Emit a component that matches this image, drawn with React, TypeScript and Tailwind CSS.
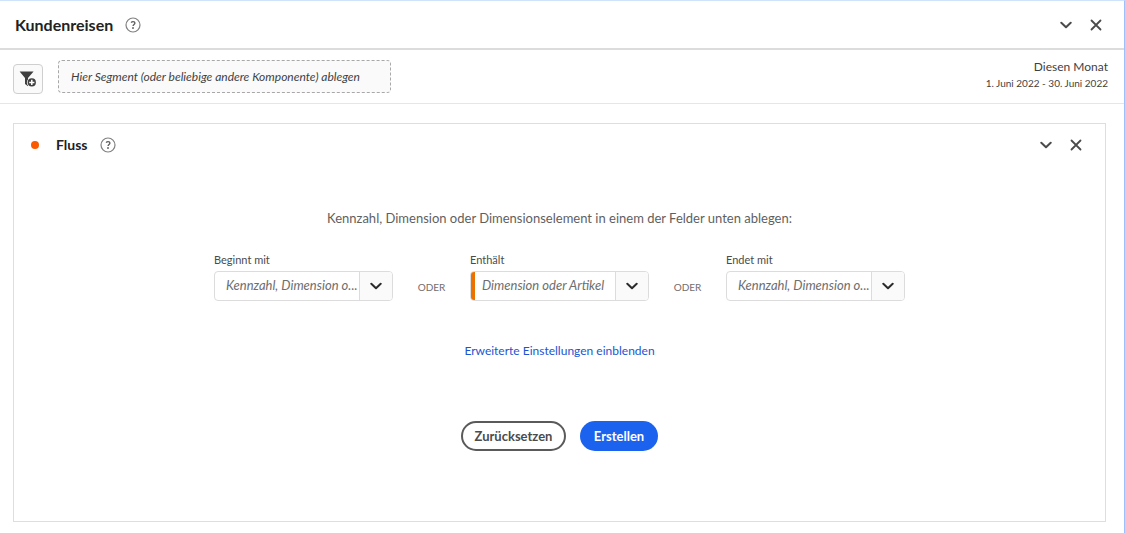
import { useId } from "react";
import type { ReactNode } from "react";

function HelpIcon() {
  return (
    <svg className="size-4" viewBox="0 0 16 16" fill="none" aria-hidden="true">
      <circle cx="8" cy="8" r="7" stroke="#808080" strokeWidth="1.2" />
      <path d="M6.2 5.6C6.6 4.9 7.3 4.6 8.1 4.6c1.1 0 1.8.6 1.8 1.5 0 1.4-1.8 1.4-1.8 3" stroke="#5f5f5f" strokeWidth="1.4" />
      <circle cx="8" cy="11" r="0.95" fill="#5f5f5f" />
    </svg>
  );
}

function ChevronIcon() {
  return (
    <svg className="h-2 w-3" viewBox="0 0 12 8" fill="none" aria-hidden="true">
      <path d="M1.3 1.8 6 6.3l4.7-4.5" stroke="currentColor" strokeWidth="2" strokeLinecap="round" strokeLinejoin="round" />
    </svg>
  );
}

function CloseIcon() {
  return (
    <svg className="size-3" viewBox="0 0 12 12" fill="none" aria-hidden="true">
      <path d="m1.5 1.5 9 9m0-9-9 9" stroke="currentColor" strokeWidth="1.8" strokeLinecap="round" />
    </svg>
  );
}

function FilterAddIcon() {
  return (
    <svg className="size-[18px]" viewBox="0 0 18 18" aria-hidden="true">
      <path d="M0.6 1.4h14L9 8v8.2L6 14V8Z" fill="#3f3f3f" />
      <circle cx="12.8" cy="12.4" r="4.9" fill="#fafafa" />
      <circle cx="12.8" cy="12.4" r="4.1" fill="#3f3f3f" />
      <path d="M12.8 9.8v5.2m-2.6-2.6h5.2" stroke="#fff" strokeWidth="1.5" />
    </svg>
  );
}

function IconButton({ label, children }: { label: string; children: ReactNode }) {
  return (
    <button type="button" aria-label={label} className="flex size-4 items-center justify-center text-[#4b4b4b]">
      {children}
    </button>
  );
}

function WindowActions() {
  return (
    <div className="flex items-center gap-[14px]">
      <IconButton label="Reduzieren">
        <ChevronIcon />
      </IconButton>
      <IconButton label="Schließen">
        <CloseIcon />
      </IconButton>
    </div>
  );
}

function DropField({ label, placeholder, required = false }: { label: string; placeholder: string; required?: boolean }) {
  const id = useId();
  return (
    <div className="flex w-[179px] flex-col gap-[3px]">
      <label htmlFor={id} className="text-[11px] leading-4 text-[#4b4b4b]">
        {label}
      </label>
      <div className="flex h-[30px] overflow-hidden rounded-[4px] border border-[#dcdcdc]">
        {required && <span className="-my-px -ml-px w-[5px] shrink-0 bg-[#ec7200]" />}
        <input
          id={id}
          type="text"
          placeholder={placeholder}
          className={`min-w-0 flex-1 text-[13px] text-[#4b4b4b] italic outline-none placeholder:text-[#6e6e6e] ${required ? "pl-[7px]" : "pl-[11px]"}`}
        />
        <button
          type="button"
          aria-label={`${label}: Auswahl öffnen`}
          className="flex w-[33px] shrink-0 items-center justify-center border-l border-[#dcdcdc] bg-[#fafafa] text-[#2c2c2c]"
        >
          <ChevronIcon />
        </button>
      </div>
    </div>
  );
}

function Or() {
  return <span className="w-[77px] pb-1 text-center text-[10px] leading-5 text-[#6e6e6e]">ODER</span>;
}

export default function App() {
  return (
    <div className="min-h-screen border-t border-r border-t-[#cfe3fb] border-r-[#9dc0fa] bg-white font-['Lato','Noto_Sans',sans-serif] text-[#2c2c2c]">
      <header className="flex h-[49px] items-center justify-between border-b-2 border-[#dcdcdc] pr-5 pl-[15px]">
        <div className="flex items-center gap-3">
          <h1 className="text-base leading-6 font-bold text-[#222]">Kundenreisen</h1>
          <button type="button" aria-label="Hilfe zu Kundenreisen">
            <HelpIcon />
          </button>
        </div>
        <WindowActions />
      </header>

      <div className="flex h-[54px] items-center justify-between border-b border-[#e6e6e6] pr-4 pl-[13px]">
        <div className="flex items-center gap-[15px]">
          <button
            type="button"
            aria-label="Segment hinzufügen"
            className="mt-1 flex size-[30px] items-center justify-center rounded-[4px] border border-[#cfcfcf] bg-[#fafafa]"
          >
            <FilterAddIcon />
          </button>
          <div className="flex h-[33px] w-[333px] items-center rounded-[4px] border border-dashed border-[#a8a8a8] bg-[#fafafa] px-3 text-[12px] text-[#3f3f3f] italic">
            Hier Segment (oder beliebige andere Komponente) ablegen
          </div>
        </div>
        <div className="pb-1 text-right text-[#3f3f3f]">
          <div className="text-[12px] leading-4">Diesen Monat</div>
          <div className="text-[10px] leading-4">1. Juni 2022 - 30. Juni 2022</div>
        </div>
      </div>

      <main className="pt-[19px] pr-[18px] pb-3 pl-[13px]">
        <section className="border border-[#dedede] pb-[70px]">
          <div className="flex h-[42px] items-center justify-between pr-[21px] pl-[17px]">
            <div className="flex items-center">
              <span className="size-2 rounded-full bg-[#fa5b00]" />
              <h2 className="ml-[17px] text-sm leading-5 font-bold text-[#222]">Fluss</h2>
              <button type="button" aria-label="Hilfe zu Fluss" className="ml-3">
                <HelpIcon />
              </button>
            </div>
            <WindowActions />
          </div>

          <form className="flex flex-col items-center pt-[42px]" onSubmit={(event) => event.preventDefault()}>
            <p className="text-[13px] leading-5 text-[#5f5f5f]">
              Kennzahl, Dimension oder Dimensionselement in einem der Felder unten ablegen:
            </p>
            <div className="mt-6 flex items-end">
              <DropField label="Beginnt mit" placeholder="Kennzahl, Dimension o..." />
              <Or />
              <DropField label="Enthält" placeholder="Dimension oder Artikel" required />
              <Or />
              <DropField label="Endet mit" placeholder="Kennzahl, Dimension o..." />
            </div>
            <a href="#einstellungen" className="mt-10 text-[12px] leading-5 text-[#1b55d0]">
              Erweiterte Einstellungen einblenden
            </a>
            <div className="mt-[60px] flex gap-[14px]">
              <button type="reset" className="h-[30px] w-[105px] rounded-full border-2 border-[#5a5a5a] text-[13px] leading-4 font-bold text-[#4b4b4b]">
                Zurücksetzen
              </button>
              <button type="submit" className="h-[30px] w-[78px] rounded-full bg-[#1b62ee] text-[13px] leading-4 font-bold text-white">
                Erstellen
              </button>
            </div>
          </form>
        </section>
      </main>
    </div>
  );
}
